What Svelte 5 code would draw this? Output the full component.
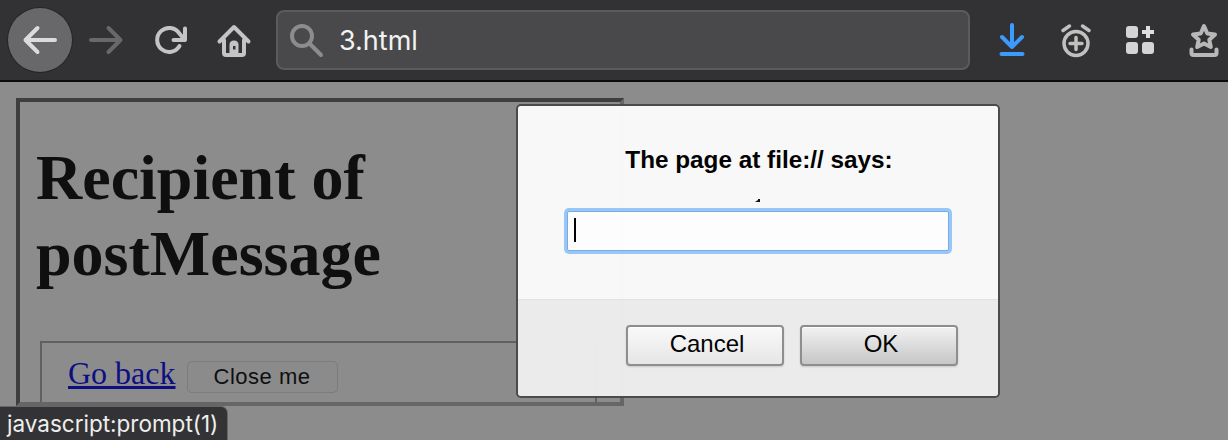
<script lang="ts">
    const url = "3.html";
</script>

<div class="window">
    <header class="toolbar">
        <button class="nav back" aria-label="Back">
            <svg width="36" height="36" viewBox="0 0 36 36"><path d="M33 18H3.500M15.500 6 3.500 18 15.500 30" /></svg>
        </button>
        <button class="nav forward" aria-label="Forward">
            <svg width="36" height="36" viewBox="0 0 36 36"><path d="M3 18H32.500M20.500 6 32.500 18 20.500 30" /></svg>
        </button>
        <button class="nav reload" aria-label="Reload">
            <svg width="36" height="36" viewBox="0 0 36 36">
                <path d="M26.500 24A12 12 0 1 1 26 11L31 17" />
                <path d="M32 6.500V18H20.500" />
            </svg>
        </button>
        <button class="nav home" aria-label="Home">
            <svg width="36" height="36" viewBox="0 0 36 36">
                <path d="M3.500 19.500 18 5 32.500 19.500" />
                <path d="M8 18V31Q8 33 10 33H26Q28 33 28 31V18" />
                <path class="door" d="M13.500 33V23Q13.500 18.500 18 18.500T22.500 23V33Z" />
                <rect class="hole" x="17" y="24" width="2.500" height="3.500" />
            </svg>
        </button>
        <div class="address">
            <svg class="search" width="36" height="36" viewBox="0 0 36 36">
                <circle cx="12" cy="14" r="10" />
                <path d="M19.500 21.500 31 33" />
            </svg>
            <span>{url}</span>
        </div>
        <div class="tools">
            <svg class="download" width="28" height="36" viewBox="0 0 28 36">
                <path d="M14 3V25M4 15 14 25 24 15" />
                <path d="M3.500 32H24.500" />
            </svg>
            <svg class="alarm" width="32" height="36" viewBox="0 0 32 36">
                <circle cx="16" cy="21.500" r="12" />
                <path d="M16 15.500V27.500M10 21.500H22" />
                <path d="M3 8.500 9.500 4M29 8.500 22.500 4" />
            </svg>
            <svg class="apps" width="30" height="32" viewBox="0 0 30 32">
                <rect x="1" y="2" width="12" height="12" rx="3" />
                <rect x="1" y="18" width="12" height="12" rx="3" />
                <rect x="17" y="18" width="12" height="12" rx="3" />
                <path d="M23 2V14M17 8H29" />
            </svg>
            <svg class="star" width="30" height="36" viewBox="0 0 30 36">
                <path d="M15 4 18.300 11.500 26 12.500 20.300 17.800 21.800 25 15 21.500 8.200 25 9.700 17.800 4 12.500 11.700 11.500Z" />
                <path d="M2.500 27.500V31Q2.500 33 4.500 33H25.500Q27.500 33 27.500 31V27.500" />
            </svg>
        </div>
    </header>

    <main class="page">
        <section class="card">
            <h1>Recipient of postMessage</h1>
            <div class="actions">
                <a href="#back">Go back</a>
                <button class="close">Close me</button>
            </div>
        </section>
    </main>

    <div class="dialog">
        <div class="body">
            <h2>The page at file:// says:</h2>
            <i class="tick"></i>
            <div class="field"><i class="caret"></i></div>
        </div>
        <div class="footer">
            <button class="dlg">Cancel</button>
            <button class="dlg ok">OK</button>
        </div>
    </div>

    <div class="status">javascript:prompt(1)</div>
</div>

<style>
    :global(body) {
        background: #8c8c8c;
        overflow: hidden;
    }
    .window {
        position: relative;
        width: 1228px;
        height: 440px;
        overflow: hidden;
        background: #8c8c8c;
    }
    .toolbar {
        height: 80px;
        display: flex;
        align-items: center;
        background: #323234;
        border-bottom: 2px solid #0c0c0c;
    }
    .nav {
        flex: none;
        width: 36px;
        padding: 0;
        border: none;
        background: none;
        display: flex;
        align-items: center;
        justify-content: center;
    }
    svg {
        display: block;
        flex: none;
        fill: none;
        stroke-width: 4px;
        stroke-linecap: round;
        stroke-linejoin: round;
    }
    .back {
        width: 64px;
        height: 64px;
        margin-left: 8px;
        border-radius: 50%;
        background: #68686a;
        box-shadow: 0 0 0 1px #262628;
    }
    .back svg {
        stroke: #dcdcdc;
    }
    .forward {
        margin-left: 16px;
    }
    .forward svg {
        stroke: #68686a;
    }
    .reload {
        margin-left: 29px;
    }
    .reload svg {
        stroke: #c4c4c4;
    }
    .home {
        margin-left: 27px;
    }
    .home svg {
        stroke: #c4c4c4;
    }
    .home .door {
        fill: #c4c4c4;
        stroke: none;
    }
    .home .hole {
        fill: #323234;
        stroke: none;
    }
    .address {
        flex: none;
        width: 694px;
        height: 60px;
        box-sizing: border-box;
        margin-left: 24px;
        padding-left: 12px;
        display: flex;
        align-items: center;
        gap: 13px;
        background: #49494b;
        border: 2px solid #5b5b5d;
        border-radius: 8px;
        color: #f2f2f2;
        font: 27px "Inter", "Liberation Sans", sans-serif;
    }
    .search {
        stroke: #8c8c8c;
    }
    .tools {
        flex: none;
        display: grid;
        grid-template-columns: repeat(4, 64px);
        justify-items: center;
        align-items: center;
        margin-left: 10px;
    }
    .download {
        stroke: #3b9bff;
    }
    .alarm {
        stroke: #c0c0c0;
        stroke-width: 3.500px;
    }
    .apps rect {
        fill: #d4d4d4;
    }
    .apps path {
        stroke: #dedede;
        stroke-linecap: butt;
    }
    .star {
        stroke: #b8b8b8;
    }
    .page {
        padding: 16px;
    }
    .card {
        width: 608px;
        height: 308px;
        box-sizing: border-box;
        padding-left: 16px;
        border: 4px solid;
        border-color: #3e3e3e #666 #666 #3e3e3e;
    }
    h1 {
        margin: 38px 0 49px;
        color: #0f0f0f;
        font: bold 64px/76px "Liberation Serif", serif;
    }
    .actions {
        width: 557px;
        height: 61px;
        box-sizing: border-box;
        margin-left: 4px;
        padding: 12px 26px 0;
        display: flex;
        align-items: flex-start;
        gap: 11px;
        border: 2px solid #606060;
        border-bottom: none;
    }
    .actions a {
        color: #0e0e84;
        font: 32px/36px "Liberation Serif", serif;
    }
    .close {
        width: 151px;
        height: 32px;
        margin-top: 6px;
        padding: 0;
        background: #8b8b8b;
        border: 1px solid #7c7c7c;
        border-radius: 5px;
        color: #0f0f0f;
        letter-spacing: 0.5px;
        font: 22px "Liberation Sans", sans-serif;
    }
    .dialog {
        position: absolute;
        left: 516px;
        top: 104px;
        width: 484px;
        height: 294px;
        box-sizing: border-box;
        display: flex;
        flex-direction: column;
        border: 2px solid #4a4a4a;
        border-radius: 5px;
        overflow: hidden;
        opacity: 0.985;
    }
    .body {
        position: relative;
        height: 194px;
        box-sizing: border-box;
        padding: 40px 0 0 2px;
        background: #fafafa;
        border-bottom: 1px solid #e4e4e4;
    }
    h2 {
        margin: 0;
        text-align: center;
        color: #000;
        font: bold 24.300px/28px "Liberation Sans", sans-serif;
    }
    .tick {
        position: absolute;
        left: 237px;
        top: 93px;
        width: 5px;
        height: 3px;
        background: #111;
        clip-path: polygon(0 100%, 60% 30%, 60% 0, 100% 0, 100% 100%);
    }
    .field {
        position: absolute;
        left: 49px;
        top: 105px;
        width: 382px;
        height: 40px;
        box-sizing: border-box;
        padding: 6px;
        background: #fff;
        border: 1px solid #7aaee8;
        border-radius: 2px;
        box-shadow: 0 0 0 3px #98c8fb;
    }
    .caret {
        display: block;
        width: 2px;
        height: 24px;
        background: #000;
    }
    .footer {
        flex: 1;
        display: flex;
        justify-content: flex-end;
        gap: 16px;
        padding: 25px 40px 0 0;
        background: #ededed;
    }
    .dlg {
        width: 158px;
        height: 41px;
        padding: 0 0 3px 4px;
        background: linear-gradient(#fbfbfb, #e8e8e8);
        border: 2px solid #8f8f8f;
        border-radius: 4px;
        box-shadow: 0 1px 2px rgba(0, 0, 0, 0.15), inset 0 1px 0 #fff;
        color: #000;
        font: 24px "Liberation Sans", sans-serif;
    }
    .ok {
        background: linear-gradient(#f4f4f4, #c8c8c8);
    }
    .status {
        position: absolute;
        left: 0;
        top: 407px;
        width: 227px;
        height: 33px;
        box-sizing: border-box;
        padding: 3px 0 0 7px;
        background: #333335;
        border-radius: 0 6px 0 0;
        box-shadow: 0 0 0 1px #666;
        color: #eee;
        font: 22.500px "Inter", "Liberation Sans", sans-serif;
    }
</style>
